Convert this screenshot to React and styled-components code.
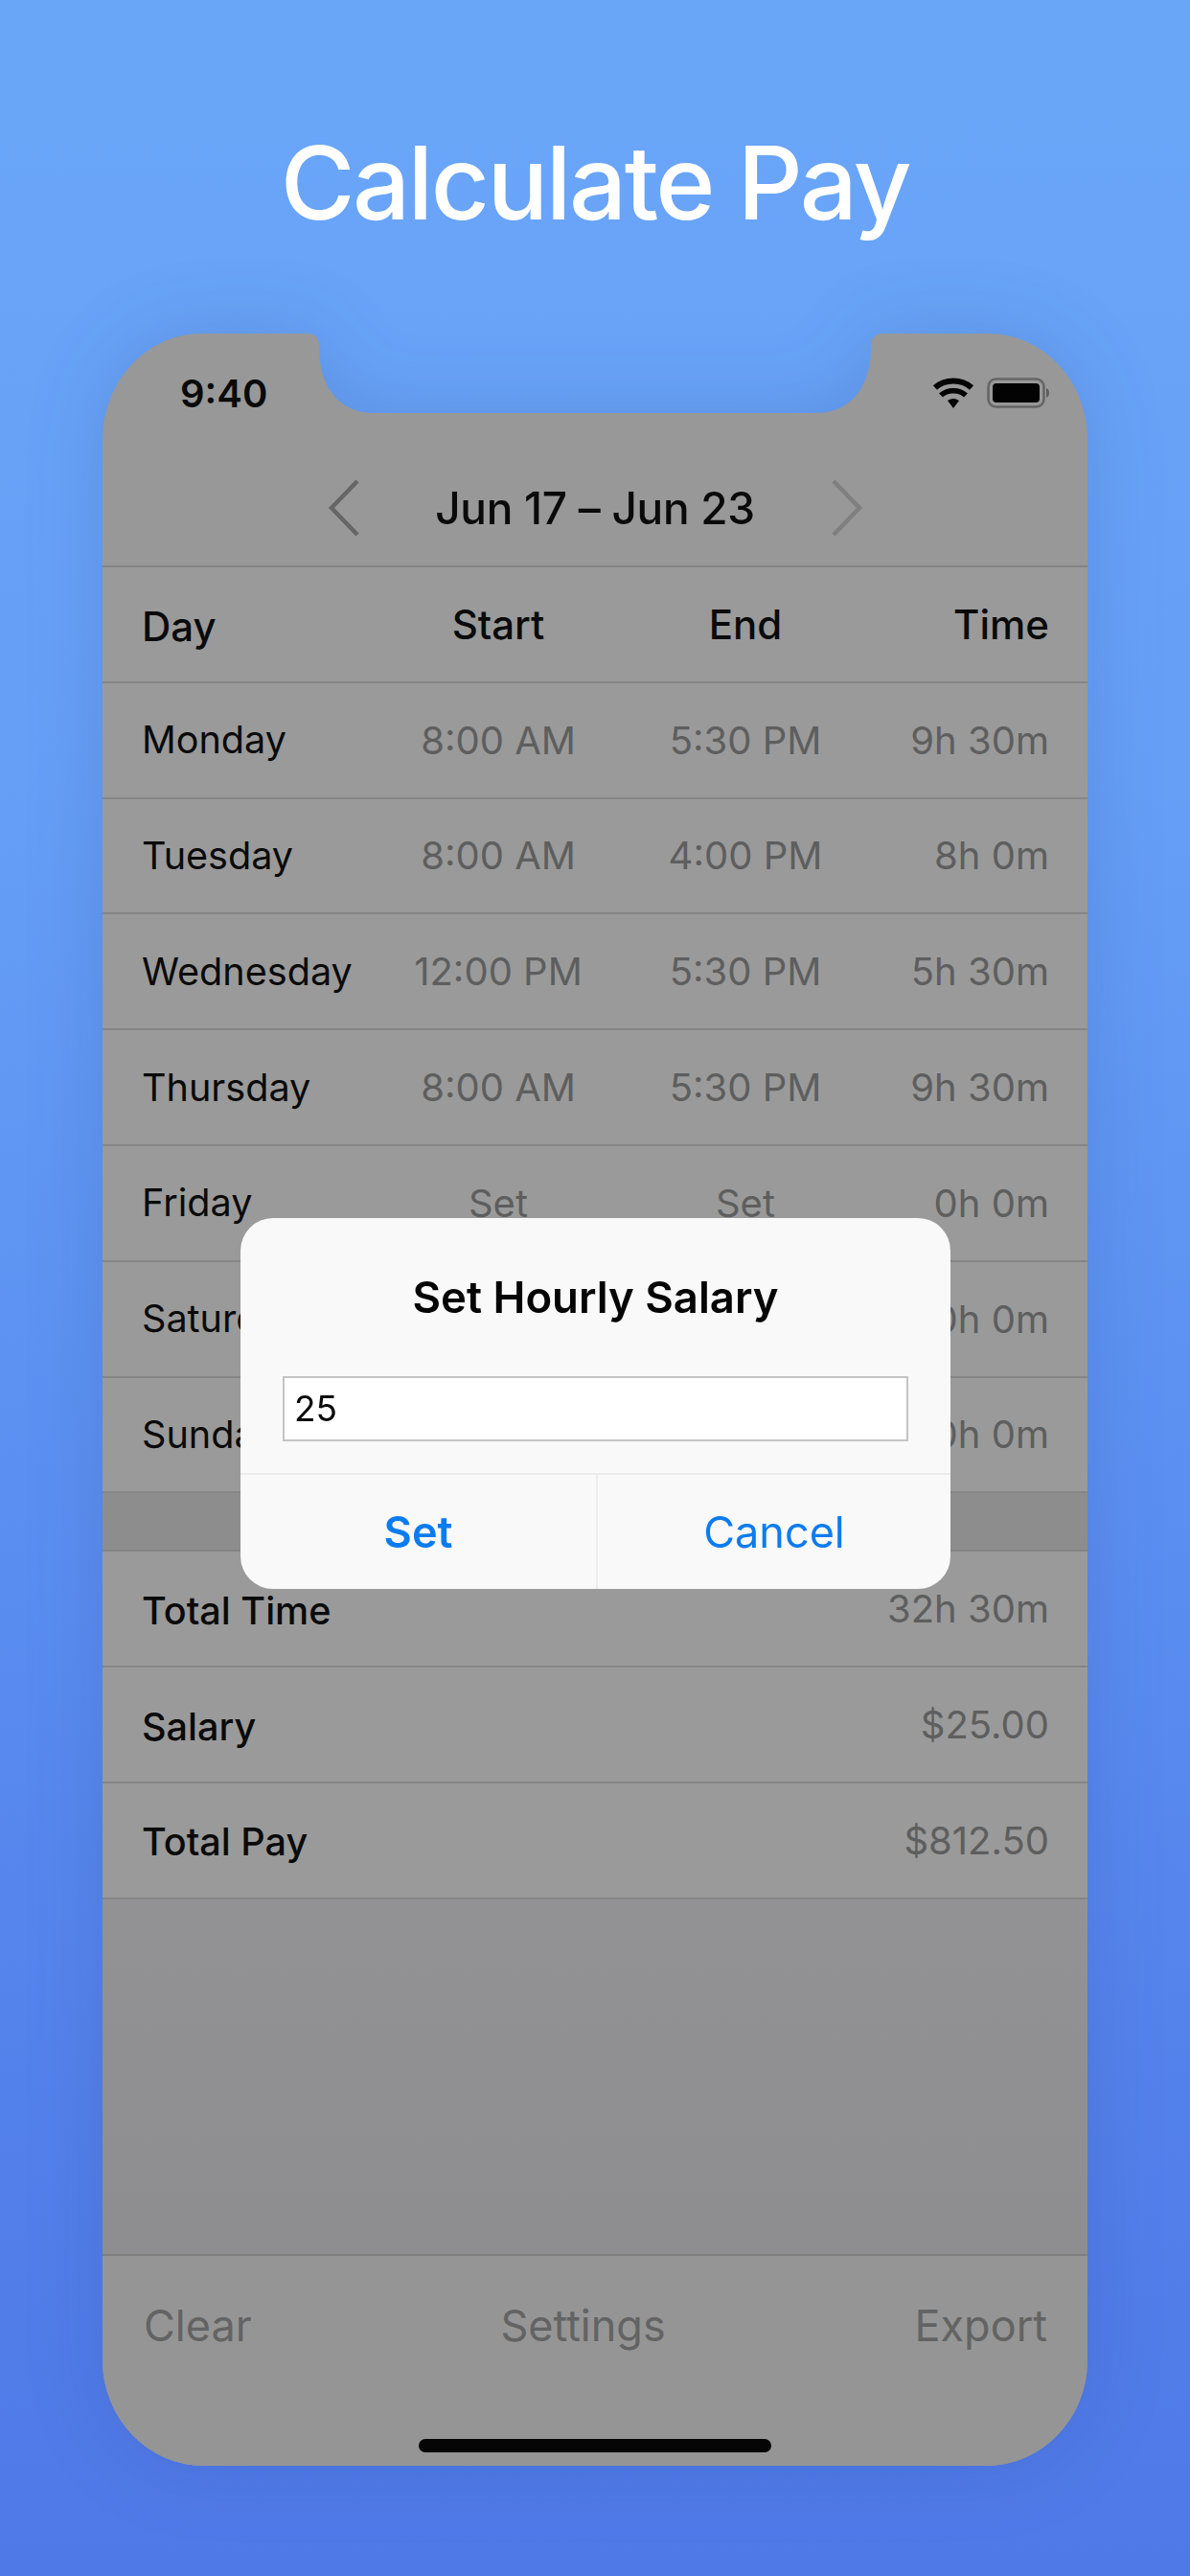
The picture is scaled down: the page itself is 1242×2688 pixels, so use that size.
import React from 'react';
import styled, { createGlobalStyle } from 'styled-components';

const Global = createGlobalStyle`
  html, body { margin: 0; padding: 0; }
  body { font-family: Inter, "Liberation Sans", sans-serif; -webkit-font-smoothing: antialiased; }
`;

const Page = styled.div`
  width: 1242px; height: 2688px; overflow: hidden;
  background: linear-gradient(180deg, #6aa6f8 0%, #659ff6 30%, #5b8ff1 58%, #527fea 85%, #4f79e7 100%);
  display: flex; flex-direction: column; align-items: center;
`;
const Headline = styled.h1`
  margin: 0; height: 348px; box-sizing: border-box; padding-top: 126px;
  font-size: 106px; line-height: 130px; font-weight: 500; color: #fff; letter-spacing: -2.5px;
`;
const ShadowWrap = styled.div`
  filter: drop-shadow(0 0 40px rgba(30, 50, 120, 0.16));
`;
const Phone = styled.div`
  position: relative; width: 1028px; height: 2225px; background: #989898;
  clip-path: path("M104 0 H214 Q226 0 226 14 C226 55 246 83 284 83 H744 C782 83 802 55 802 14 Q802 0 814 0 H924 A104 110 0 0 1 1028 110 V2115 A106 110 0 0 1 922 2225 H106 A106 110 0 0 1 0 2115 V110 A104 110 0 0 1 104 0 Z");
  display: flex; flex-direction: column;
`;
const StatusBar = styled.div`
  height: 142px; box-sizing: border-box; padding: 38px 38px 0 81px;
  display: flex; justify-content: space-between; align-items: flex-start;
`;
const Clock = styled.span`
  font-size: 40px; line-height: 50px; font-weight: 600; color: #0a0a0a;
`;
const StatusIcons = styled.div`
  display: flex; align-items: center; gap: 14px; padding-top: 8px;
`;
const NavBar = styled.div`
  height: 100px; box-sizing: border-box; padding-bottom: 20px;
  display: flex; align-items: center; justify-content: center; gap: 76px;
`;
const NavTitle = styled.span`
  font-size: 46px; font-weight: 500; color: #0a0a0a; letter-spacing: -0.3px; width: 337px; text-align: center; white-space: nowrap;
`;
const Section = styled.div`
  background: #9a9a9a; border-top: 2px solid #848484;
`;
const Row = styled.div`
  height: 118.8px; display: grid;
  grid-template-columns: 243px 258px 258px 1fr; padding: 0 40px 0 41px;
  align-items: center; border-bottom: 2px solid #858585;
  font-size: ${p => (p.$head ? 42 : 40)}px; color: ${p => (p.$head ? '#0a0a0a' : '#5e5e5e')};
`;
const Day = styled.span`
  color: #0a0a0a; white-space: nowrap; font-size: ${p => (p.$head ? 42 : 39.6)}px;
  font-weight: ${p => (p.$strong || p.$head ? 500 : 400)};
  ${p => p.$head && 'padding-top: 4px;'}
  ${p => p.$strong && 'padding-top: 4px;'}
`;
const Cell = styled.span`
  text-align: center; white-space: nowrap;
  font-weight: ${p => (p.$head ? 500 : 400)};
`;
const EndCell = styled.span`
  text-align: right; white-space: nowrap; font-weight: ${p => (p.$head ? 500 : 400)};
  grid-column: 4;
`;
const Gap = styled.div`
  height: 59px; background: #8d8d8d;
`;
const Spacer = styled.div`
  flex: 1; background: linear-gradient(180deg, #929294, #8e8e90);
`;
const Toolbar = styled.div`
  height: 221px; box-sizing: border-box; border-top: 2px solid #7f7f7f; background: #959595;
  display: flex; justify-content: space-between; align-items: flex-start;
  padding: 46px 42px 0 43px; position: relative;
`;
const ToolText = styled.span`
  font-size: 45px; line-height: 54px; color: #636363;
`;
const HomeBar = styled.div`
  position: absolute; left: 330px; bottom: 14px; width: 368px; height: 14px; border-radius: 7px; background: #050505;
`;
const Dialog = styled.div`
  position: absolute; left: 144px; top: 923px; width: 741px; height: 387px; border-radius: 34px;
  background: #f9f9f9; display: flex; flex-direction: column; overflow: hidden;
`;
const DialogTitle = styled.div`
  height: 165px; box-sizing: border-box; padding-top: 55px; text-align: center;
  font-size: 45.5px; line-height: 56px; font-weight: 600; color: #050505;
`;
const Field = styled.div`
  margin: 0 44px; height: 68px; box-sizing: border-box; border: 2px solid #c4c4c4; background: #fff;
  font-size: 37px; line-height: 64px; padding-left: 10px; color: #0a0a0a;
`;
const Buttons = styled.div`
  margin-top: 33px; flex: 1; display: grid; grid-template-columns: 371px 1fr; border-top: 2px solid #ececec;
`;
const DialogButton = styled.div`
  display: flex; align-items: center; justify-content: center; font-size: 45px;
  color: #0b7cf0; font-weight: ${p => (p.$bold ? 600 : 400)};
  & + & { border-left: 2px solid #ececec; }
`;

const days = [
  ['Monday', '8:00 AM', '5:30 PM', '9h 30m'],
  ['Tuesday', '8:00 AM', '4:00 PM', '8h 0m'],
  ['Wednesday', '12:00 PM', '5:30 PM', '5h 30m'],
  ['Thursday', '8:00 AM', '5:30 PM', '9h 30m'],
  ['Friday', 'Set', 'Set', '0h 0m'],
  ['Saturday', '', '', '0h 0m'],
  ['Sunday', '', '', '0h 0m'],
];
const totals = [['Total Time', '32h 30m'], ['Salary', '$25.00'], ['Total Pay', '$812.50']];

const Chevron = ({ left, color }) => (
  <svg width="36" height="60" viewBox="0 0 36 60" fill="none">
    <path d={left ? 'M32 2 L5 30 L32 58' : 'M4 2 L31 30 L4 58'} stroke={color} strokeWidth="4.5" />
  </svg>
);

const Wifi = () => (
  <svg width="42" height="32" viewBox="0 0 42 32">
    <path d="M15 24 Q21 20 27 24 L21 32 Z" fill="#050505" />
    <path d="M8 18.5 C14.5 12 27.5 12 34 18.5" stroke="#050505" strokeWidth="5.5" fill="none" />
    <path d="M2 10.5 C12 1 30 1 40 10.5" stroke="#050505" strokeWidth="6" fill="none" />
  </svg>
);
const Battery = () => (
  <svg width="67" height="32" viewBox="0 0 67 32">
    <rect x="1.5" y="1.5" width="58" height="29" rx="8" fill="none" stroke="#656565" strokeWidth="2.5" />
    <rect x="6" y="6" width="49" height="20" rx="4" fill="#030303" />
    <path d="M62 11 C66 12 66 20 62 21 Z" fill="#5f5f5f" />
  </svg>
);

export default function App() {
  return (
    <Page>
      <Global />
      <Headline>Calculate Pay</Headline>
      <ShadowWrap>
        <Phone>
          <StatusBar>
            <Clock>9:40</Clock>
            <StatusIcons><Wifi /><Battery /></StatusIcons>
          </StatusBar>
          <NavBar>
            <Chevron left color="#666" />
            <NavTitle>Jun 17 – Jun 23</NavTitle>
            <Chevron color="#7f7f7f" />
          </NavBar>
          <Section>
            <Row $head>
              <Day $head>Day</Day><Cell $head>Start</Cell><Cell $head>End</Cell><EndCell $head>Time</EndCell>
            </Row>
            {days.map(d => (
              <Row key={d[0]}>
                <Day>{d[0]}</Day><Cell>{d[1]}</Cell><Cell>{d[2]}</Cell><EndCell>{d[3]}</EndCell>
              </Row>
            ))}
          </Section>
          <Gap />
          <Section>
            {totals.map(t => (
              <Row key={t[0]}>
                <Day $strong>{t[0]}</Day><EndCell>{t[1]}</EndCell>
              </Row>
            ))}
          </Section>
          <Spacer />
          <Toolbar>
            <ToolText>Clear</ToolText>
            <ToolText>Settings</ToolText>
            <ToolText>Export</ToolText>
            <HomeBar />
          </Toolbar>
          <Dialog>
            <DialogTitle>Set Hourly Salary</DialogTitle>
            <Field>25</Field>
            <Buttons>
              <DialogButton $bold>Set</DialogButton>
              <DialogButton>Cancel</DialogButton>
            </Buttons>
          </Dialog>
        </Phone>
      </ShadowWrap>
    </Page>
  );
}
